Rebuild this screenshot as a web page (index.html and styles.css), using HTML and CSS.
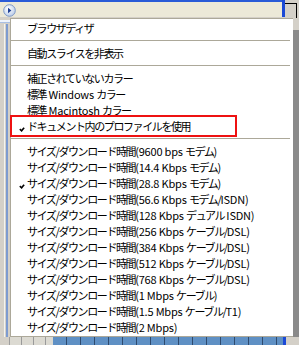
FILE: index.html
```html
<!DOCTYPE html>
<html lang="ja">
<head>
<meta charset="utf-8">
<link rel="stylesheet" href="styles.css">
</head>
<body>
<div class="screen">
  <div class="topbar">
    <div class="toolbar">
      <svg class="menubtn" width="13" height="13" viewBox="0 0 13 13">
        <defs>
          <radialGradient id="g" cx="0.4" cy="0.35" r="0.7">
            <stop offset="0" stop-color="#ffffff"/>
            <stop offset="1" stop-color="#b8cbe8"/>
          </radialGradient>
        </defs>
        <circle cx="6.5" cy="6.5" r="5.8" fill="url(#g)" stroke="#7d98c6" stroke-width="1"/>
        <path d="M5 3.8 L8.4 6.5 L5 9.2 Z" fill="#1f3f94"/>
      </svg>
    </div>
    <div class="vline"></div>
    <div class="rightbox"></div>
  </div>
  <div class="main">
    <div class="leftpanel">
      <div class="lp-top"></div>
      <div class="lp-body"><span class="lp-white"></span><span class="lp-blue"></span></div>
    </div>
    <div class="menu">
      <div class="item">ブラウザディザ</div>
      <div class="sep"></div>
      <div class="item">自動スライスを非表示</div>
      <div class="sep"></div>
      <div class="item">補正されていないカラー</div>
      <div class="item">標準<span class="l"> Windows </span>カラー</div>
      <div class="item">標準<span class="l"> Macintosh </span>カラー</div>
      <div class="item checked">ドキュメント内のプロファイルを使用</div>
      <div class="sep"></div>
      <div class="item">サイズ/ダウンロード時間<span class="l">(9600 bps </span>モデム)</div>
      <div class="item">サイズ/ダウンロード時間<span class="l">(14.4 Kbps </span>モデム)</div>
      <div class="item checked">サイズ/ダウンロード時間<span class="l">(28.8 Kbps </span>モデム)</div>
      <div class="item">サイズ/ダウンロード時間<span class="l">(56.6 Kbps </span>モデム/<span class="l">ISDN)</span></div>
      <div class="item">サイズ/ダウンロード時間<span class="l">(128 Kbps </span>デュアル<span class="l"> ISDN)</span></div>
      <div class="item">サイズ/ダウンロード時間<span class="l">(256 Kbps </span>ケーブル/<span class="l">DSL)</span></div>
      <div class="item">サイズ/ダウンロード時間<span class="l">(384 Kbps </span>ケーブル/<span class="l">DSL)</span></div>
      <div class="item">サイズ/ダウンロード時間<span class="l">(512 Kbps </span>ケーブル/<span class="l">DSL)</span></div>
      <div class="item">サイズ/ダウンロード時間<span class="l">(768 Kbps </span>ケーブル/<span class="l">DSL)</span></div>
      <div class="item">サイズ/ダウンロード時間<span class="l">(1 Mbps </span>ケーブル)</div>
      <div class="item">サイズ/ダウンロード時間<span class="l">(1.5 Mbps </span>ケーブル/<span class="l">T1)</span></div>
      <div class="item">サイズ/ダウンロード時間<span class="l">(2 Mbps)</span></div>
    </div>
    <div class="shadow"></div>
  </div>
  <div class="bottom">
    <div class="b-left"></div>
    <div class="b-light"></div>
    <div class="b-cells"></div>
    <div class="b-line"></div>
    <div class="b-rest"></div>
  </div>
  <div class="highlight"></div>
</div>
</body>
</html>
```
FILE: styles.css
```css
html, body {
  margin: 0;
  padding: 0;
}
body {
  background: #d4d0c8;
  font-family: "Noto Sans CJK JP", "Liberation Sans", sans-serif;
  font-size: 12px;
  color: #000;
}
.screen {
  position: relative;
  width: 299px;
  height: 345px;
  overflow: hidden;
  display: flex;
  flex-direction: column;
  background: #d4d0c8;
}
.topbar {
  display: flex;
  height: 18px;
  flex: none;
}
.toolbar {
  width: 282px;
  background: #ece9d8;
  border-top: 2px solid #2a5bd7;
  border-bottom: 1px solid #d4d0c8;
  box-sizing: border-box;
  padding: 2px 0 0 3px;
}
.menubtn {
  display: block;
}
.vline {
  width: 3px;
  background: #1b49d6;
  height: 17px;
}
.rightbox {
  flex: 1;
  margin-top: 3px;
  border-top: 1px solid #000;
  border-right: 1px solid #000;
  margin-right: 2px;
  background: #d4d0c8;
}
.main {
  display: flex;
  height: 319px;
  flex: none;
}
.leftpanel {
  width: 10px;
  display: flex;
  flex-direction: column;
}
.lp-top {
  height: 6px;
  background: linear-gradient(#d4d0c8 0 2px, #eef3fb 2px 4px, #a9bfe3 4px 5px, #d4d0c8 5px);
}
.lp-body {
  flex: 1;
  display: flex;
  padding-left: 4px;
  gap: 1px;
}
.lp-white {
  width: 1px;
  background: #f4f4f0;
}
.lp-blue {
  width: 2px;
  background: #7d9bd0;
}
.menu {
  width: 283px;
  background: #fff;
  border-top: 1px solid #aca899;
  border-left: 1px solid #aca899;
  border-bottom: 1px solid #aca899;
  box-sizing: border-box;
  padding: 1px 0;
  display: flex;
  flex-direction: column;
}
.item {
  height: 16px;
  line-height: 16px;
  padding-left: 16px;
  white-space: nowrap;
  position: relative;
  font-size: 11px;
  letter-spacing: -1.4px;
}
.l {
  letter-spacing: -0.2px;
}
.item.checked::before {
  content: "";
  position: absolute;
  left: 9px;
  top: 8px;
  width: 2px;
  height: 4px;
  border-right: 2px solid #000;
  border-bottom: 2px solid #000;
  transform: rotate(40deg) scale(0.8);
}
.sep {
  height: 9px;
  box-sizing: border-box;
  padding-top: 4px;
  margin-right: 3px;
}
.sep::before {
  content: "";
  display: block;
  height: 1px;
  background: #aca899;
}
.shadow {
  width: 6px;
  background: linear-gradient(#d4d0c8 0 12px, #8a8a8a 12px);
}
.bottom {
  display: flex;
  flex: 1;
}
.b-left {
  width: 10px;
  background: #d4d0c8;
  border-right: 1px solid #9e9e9e;
  box-sizing: border-box;
}
.b-light {
  width: 43px;
  background: repeating-linear-gradient(90deg, #dcdad2 0 11px, #9a9a9a 11px 12px);
}
.b-cells {
  width: 230px;
  background: repeating-linear-gradient(90deg, #5f90c4 0 13px, #2e4a6e 13px 14px);
}
.b-line {
  width: 3px;
  background: #1b49d6;
}
.b-rest {
  flex: 1;
  background: #d4d0c8;
}
.highlight {
  position: absolute;
  left: 10px;
  top: 115px;
  width: 227px;
  height: 22px;
  box-sizing: border-box;
  border: 2px solid #ee1111;
}
```
